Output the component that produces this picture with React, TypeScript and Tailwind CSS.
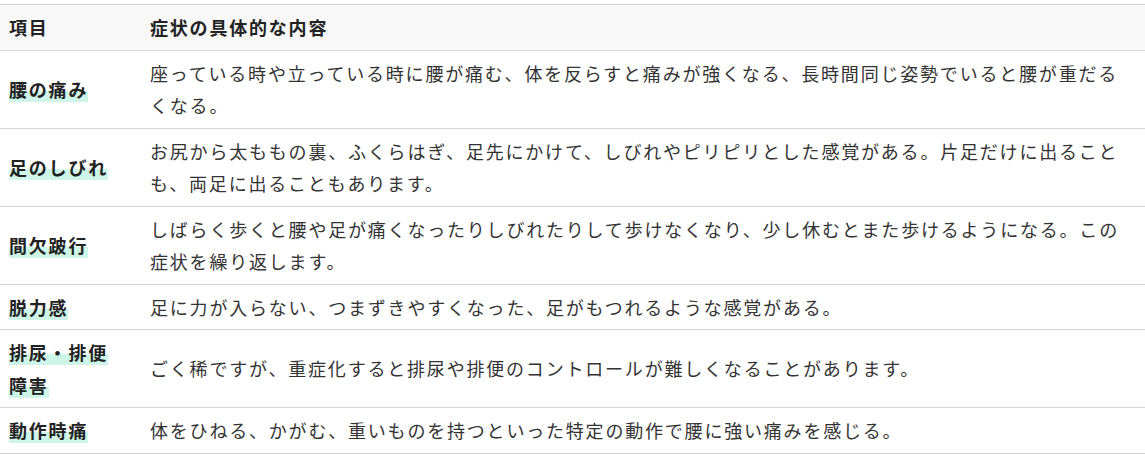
const rows = [
  {
    label: "腰の痛み",
    text: "座っている時や立っている時に腰が痛む、体を反らすと痛みが強くなる、長時間同じ姿勢でいると腰が重だるくなる。",
  },
  {
    label: "足のしびれ",
    text: "お尻から太ももの裏、ふくらはぎ、足先にかけて、しびれやピリピリとした感覚がある。片足だけに出ることも、両足に出ることもあります。",
  },
  {
    label: "間欠跛行",
    text: "しばらく歩くと腰や足が痛くなったりしびれたりして歩けなくなり、少し休むとまた歩けるようになる。この症状を繰り返します。",
  },
  { label: "脱力感", text: "足に力が入らない、つまずきやすくなった、足がもつれるような感覚がある。" },
  { label: "排尿・排便障害", text: "ごく稀ですが、重症化すると排尿や排便のコントロールが難しくなることがあります。" },
  { label: "動作時痛", text: "体をひねる、かがむ、重いものを持つといった特定の動作で腰に強い痛みを感じる。" },
];

export default function App() {
  return (
    <div
      className="bg-white pt-[4px] text-[18px] leading-[32.5px] tracking-[0.1em] text-[#333]"
      style={{ fontFamily: '"Noto Sans CJK JP", "Noto Sans", sans-serif' }}
    >
      <table className="w-full border-collapse">
        <thead>
          <tr className="border-y border-[#d4d4d4] bg-[#f8f8f8]">
            <th className="w-[141px] pl-[9px] pr-[20px] py-[6px] text-left font-bold text-[#222]">項目</th>
            <th className="px-[9px] py-[6px] text-left font-bold text-[#222]">症状の具体的な内容</th>
          </tr>
        </thead>
        <tbody>
          {rows.map((r) => (
            <tr key={r.label} className="border-b border-[#d4d4d4]">
              <th className="pl-[9px] pr-[20px] py-[6px] text-left align-middle font-bold text-[#222]">
                <span className="bg-[linear-gradient(transparent_58%,#cdf6e8_58%)]">{r.label}</span>
              </th>
              <td className="px-[9px] py-[6px] align-middle">{r.text}</td>
            </tr>
          ))}
        </tbody>
      </table>
    </div>
  );
}
